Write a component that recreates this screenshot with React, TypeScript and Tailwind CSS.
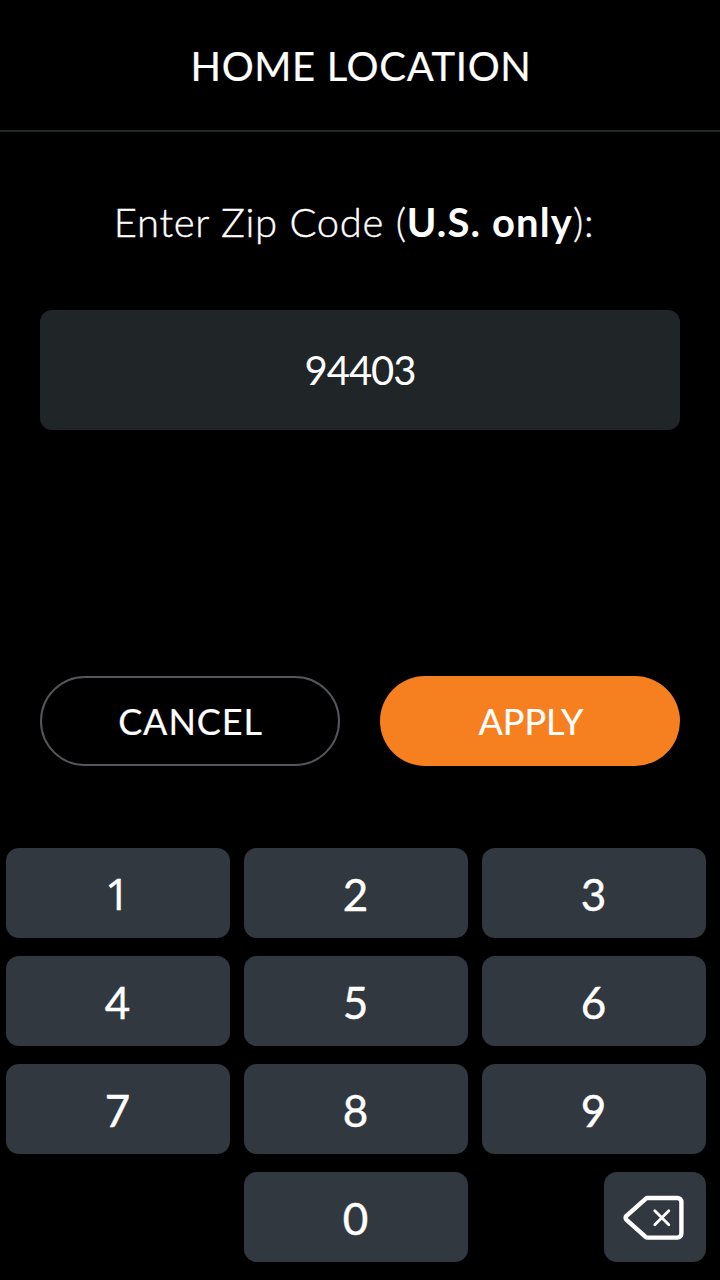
import { useState } from "react";

const KEYS = ["1", "2", "3", "4", "5", "6", "7", "8", "9"];

function BackspaceIcon() {
  return (
    <svg
      className="block w-[102px] h-[90px]"
      viewBox="0 0 102 90"
      fill="none"
      stroke="currentColor"
      strokeLinecap="round"
      strokeLinejoin="round"
    >
      <path
        strokeWidth="4.4"
        d="M43.6 26H73.4a4 4 0 0 1 4 4V61.6a4 4 0 0 1-4 4H43.6a3 3 0 0 1-2-.8L22.5 47.8a2.6 2.6 0 0 1 0-4L41.6 26.8a3 3 0 0 1 2-.8Z"
      />
      <path strokeWidth="2.8" d="M50.8 38.8 64.8 52.8M64.8 38.8 50.8 52.8" />
    </svg>
  );
}

interface KeyProps {
  label: string;
  onPress: (label: string) => void;
}

function Key({ label, onPress }: KeyProps) {
  return (
    <button
      data-label={label}
      className="h-[90px] rounded-[13px] bg-[#32383f] pt-px pr-px text-[44px] leading-none [-webkit-text-stroke:0.4px_white] data-[label='1']:font-['Open_Sans',sans-serif] data-[label='1']:pt-0"
      onClick={() => onPress(label)}
    >
      {label}
    </button>
  );
}

function App() {
  const [zip, setZip] = useState("94403");

  const handlePress = (digit: string) => {
    setZip((prev) => (prev.length < 5 ? prev + digit : prev));
  };

  return (
    <main className="flex flex-col w-[720px] h-[1280px] overflow-hidden bg-black text-white font-['Lato','Open_Sans',sans-serif]">
      <header className="flex items-center justify-center h-[132px] pt-0.5 pl-0.5 border-b-2 border-[#202528]">
        <h1 className="text-[40px] leading-none tracking-[0.65px] [-webkit-text-stroke:0.2px_white]">
          HOME LOCATION
        </h1>
      </header>

      <section className="flex flex-col px-10">
        <p className="mt-[69px] h-[49px] pr-3 text-center text-[40px] leading-[42px] font-light tracking-[0.72px] whitespace-nowrap [-webkit-text-stroke:0.4px_white]">
          Enter Zip Code (
          <b className="font-bold tracking-[1.1px] [-webkit-text-stroke:0]">
            U.S. only
          </b>
          ):
        </p>
        <div className="flex items-center justify-center mt-[60px] h-[120px] rounded-xl bg-[#202528] text-[40px] leading-none tracking-[-1px]">
          {zip}
        </div>
        <div className="grid grid-cols-2 gap-10 mt-[246px] text-[36px] leading-none [-webkit-text-stroke:0.2px_white]">
          <button
            className="h-[90px] rounded-full border-2 border-[#53565a] pl-px tracking-[0.9px]"
            onClick={() => setZip("")}
          >
            CANCEL
          </button>
          <button className="h-[90px] rounded-full bg-[#f68020] pl-0.5">
            APPLY
          </button>
        </div>
      </section>

      <section className="grid grid-cols-[224px_224px_224px] gap-x-[14px] gap-y-[18px] mt-[82px] ml-1.5">
        {KEYS.map((key) => (
          <Key key={key} label={key} onPress={handlePress} />
        ))}
        <div></div>
        <Key label="0" onPress={handlePress} />
        <button
          className="justify-self-end rounded-[13px] bg-[#32383f]"
          onClick={() => setZip((prev) => prev.slice(0, -1))}
        >
          <BackspaceIcon />
        </button>
      </section>
    </main>
  );
}

export default App;
